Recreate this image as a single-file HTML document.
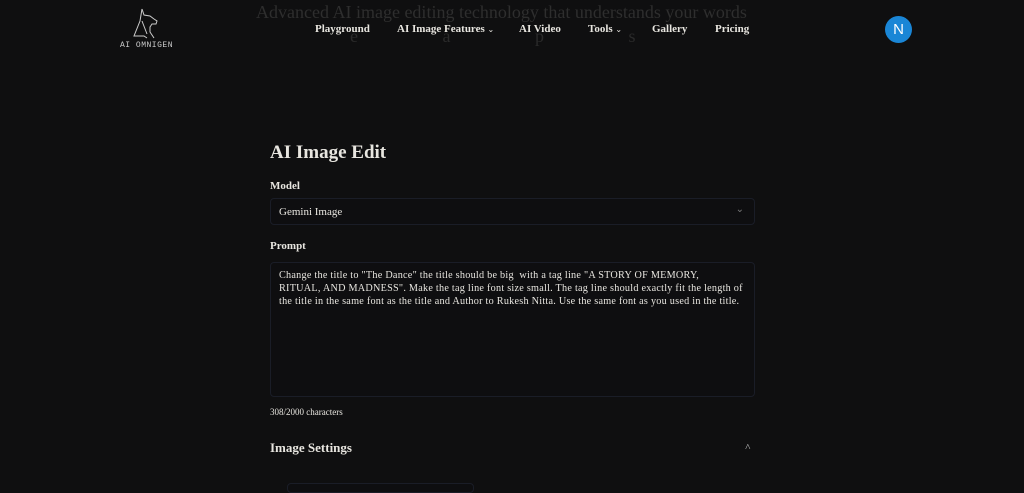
<!DOCTYPE html>
<html><head><meta charset="utf-8"><style>
*{margin:0;padding:0;box-sizing:border-box}
body{width:1024px;height:489px;overflow:hidden;background:#0f0f10;font-family:"Liberation Serif",serif;color:#e8e6e0;position:relative}
.abs{position:absolute}
.bg{color:#2e2e2e;font-size:18px;white-space:nowrap}
nav a{position:absolute;top:23px;font-size:11px;font-weight:bold;color:#e8e6e0;text-decoration:none;white-space:nowrap}
.box{position:absolute;border:1px solid #1a1d27;border-radius:4px;background:#0e0e10}
</style></head><body>
<div class="abs bg" style="left:256px;top:2px">Advanced AI image editing technology that understands your words</div>
<div class="abs bg" style="left:350px;top:26px;letter-spacing:40px;color:#2a2a2a">e a p s</div>
<svg class="abs" style="left:130px;top:7px" width="40" height="32" viewBox="0 0 40 32" fill="none" stroke="#ccc" stroke-width="1">
<path d="M12 2 L14 8 L20 9 L24 12 L27 14 L26 17 L22 17 L20 20 L20 25 L24 31"/><path d="M12 2 L10 14 L4 29 L14 29 L17 31"/><path d="M12 14 L17 27"/></svg>
<div class="abs" style="left:120px;top:41px;font-family:'Liberation Mono',monospace;font-size:8px;color:#ccc;letter-spacing:0.5px">AI OMNIGEN</div>
<nav>
<a style="left:315px">Playground</a>
<a style="left:397px">AI Image Features <span style="font-weight:normal;font-size:8px">⌄</span></a>
<a style="left:519px">AI Video</a>
<a style="left:588px">Tools <span style="font-weight:normal;font-size:8px">⌄</span></a>
<a style="left:652px">Gallery</a>
<a style="left:715px">Pricing</a>
</nav>
<div class="abs" style="left:885px;top:16px;width:27px;height:27px;border-radius:50%;background:#1a86d6;color:#fff;font-family:'Liberation Sans',sans-serif;font-size:15px;text-align:center;line-height:27px">N</div>
<div class="abs" style="left:270px;top:142px;font-size:19px;font-weight:bold">AI Image Edit</div>
<div class="abs" style="left:270px;top:180px;font-size:11px;font-weight:bold">Model</div>
<div class="box" style="left:270px;top:198px;width:485px;height:27px"><span style="position:absolute;left:8px;top:7px;font-size:11px">Gemini Image</span><span style="position:absolute;right:10px;top:5px;font-size:10px;color:#777">⌄</span></div>
<div class="abs" style="left:270px;top:240px;font-size:11px;font-weight:bold">Prompt</div>
<div class="box" style="left:270px;top:262px;width:485px;height:135px;padding:6px 8px;font-size:10.2px;line-height:13px;letter-spacing:0.25px">Change the title to "The Dance" the title should be big&nbsp; with a tag line "A STORY OF MEMORY,<br>RITUAL, AND MADNESS". Make the tag line font size small. The tag line should exactly fit the length of the title in the same font as the title and Author to Rukesh Nitta. Use the same font as you used in the title.</div>
<div class="abs" style="left:270px;top:407px;font-size:9px">308/2000 characters</div>
<div class="abs" style="left:270px;top:440px;font-size:13px;font-weight:bold">Image Settings</div>
<div class="abs" style="left:745px;top:442px;font-size:10px;color:#ccc">˄</div>
<div class="box" style="left:287px;top:483px;width:187px;height:10px"></div>
</body></html>
